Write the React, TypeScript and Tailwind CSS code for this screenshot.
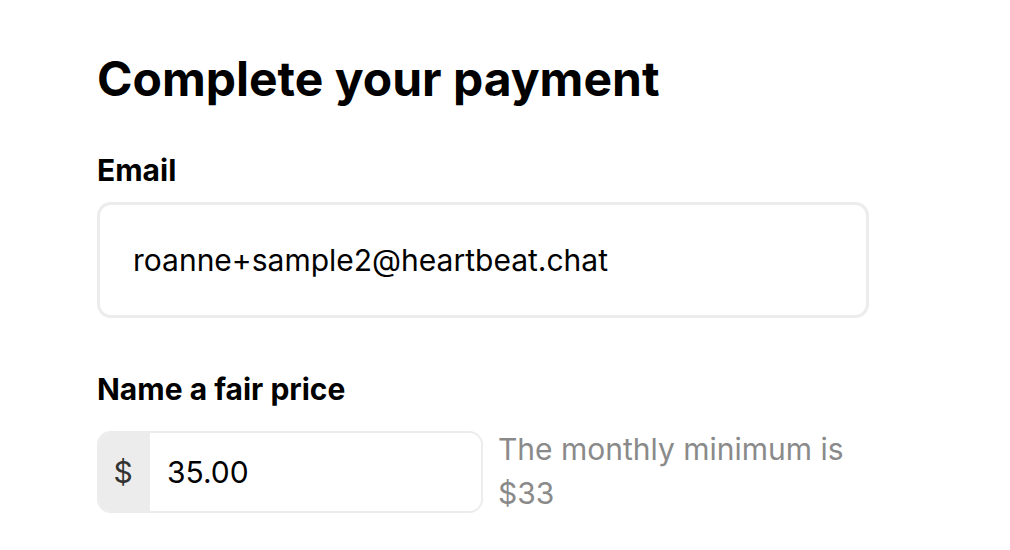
export default function App() {
  return (
    <div className="min-h-[550px] w-[1010px] bg-white font-['Inter',sans-serif] text-black">
      <div className="pl-[97px] pt-[51px]">
        <h1 className="text-[48px] font-bold leading-[56px]">Complete your payment</h1>
        <div className="mt-[45px] text-[30px] font-bold leading-[36px]">Email</div>
        <div className="mt-[14px] flex h-[116px] w-[772px] items-center rounded-[14px] border-[3px] border-[#ececec] pl-[33px] text-[30px]">
          roanne+sample2@heartbeat.chat
        </div>
        <div className="mt-[53px] text-[30px] font-bold leading-[36px]">Name a fair price</div>
        <div className="mt-[24px] flex items-start">
          <div className="flex h-[82px] w-[386px] overflow-hidden rounded-[14px] border-[2px] border-[#ececec]">
            <div className="flex w-[51px] items-center justify-center bg-[#ececec] pr-[3px] text-[30px] text-[#333]">$</div>
            <div className="flex flex-1 items-center bg-white pl-[17px] text-[30px]">35.00</div>
          </div>
          <div className="ml-[15px] mt-[-4px] w-[370px] text-[30px] leading-[44px] text-[#8a8a8a]">
            The monthly minimum is $33
          </div>
        </div>
      </div>
    </div>
  );
}
